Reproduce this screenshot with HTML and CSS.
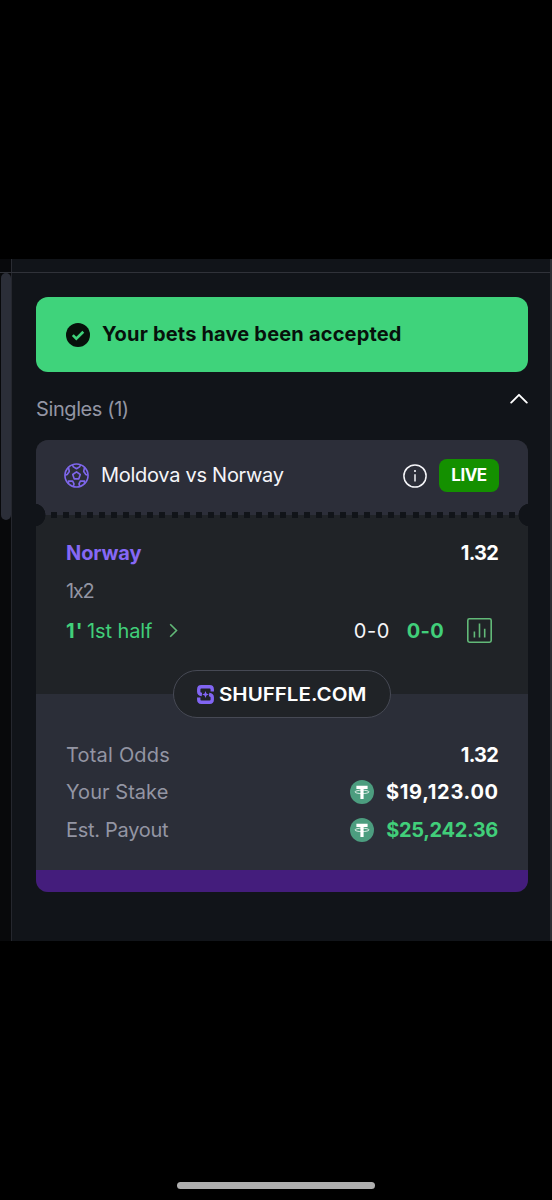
FILE: index.html
```html
<!DOCTYPE html>
<html lang="en">
<head>
<meta charset="utf-8">
<title>Bet slip</title>
<link rel="stylesheet" href="styles.css">
</head>
<body>
<div class="screen">
  <div class="panel">
    <div class="topbar"><div class="topbar-gutter"></div><div class="topbar-main"></div></div>
    <div class="content">
      <div class="gutter"><div class="scroll-thumb"></div></div>
      <main class="slip">
        <div class="banner">
          <svg class="icon24" viewBox="0 0 24 24"><circle cx="12" cy="12" r="12" fill="#07110b"/><path d="M6.8 12.1l3.5 3.5 7-6.9" fill="none" stroke="#3fd37b" stroke-width="2.7"/></svg>
          <span class="banner-text">Your bets have been accepted</span>
        </div>
        <div class="group">
          <span class="group-title">Singles (1)</span>
          <svg class="chevron-up" viewBox="0 0 18 11"><path d="M1.2 9.6L9 1.8l7.8 7.8" fill="none" stroke="#fff" stroke-width="1.9" stroke-linecap="round" stroke-linejoin="round"/></svg>
        </div>
        <section class="card">
          <header class="card-head">
            <svg class="ball" viewBox="0 0 26 26" fill="none" stroke="#7e66ea" stroke-width="1.7" stroke-linejoin="round">
              <circle cx="13" cy="13" r="12"/>
              <path d="M13 9.2l3.9 2.8-1.5 4.5h-4.8L9.1 12z"/>
              <path d="M8.7 2L9.8 4 13 6l3.2-2 1.1-2M1.3 12.6l2-.6 2.2-3.2-.8-4M24.7 12.6l-2-.6-2.2-3.2.8-4M4.7 21.4l-.1-2.7 4.4.1 1.4 3-.8 2.7M21.3 21.4l.1-2.7-4.4.1-1.4 3 .8 2.7"/>
            </svg>
            <span class="match">Moldova vs Norway</span>
            <svg class="icon24 info" viewBox="0 0 24 24"><circle cx="12" cy="12" r="11.1" fill="none" stroke="#f4f4f8" stroke-width="1.5"/><path d="M12 10.2v7.2" stroke="#f4f4f8" stroke-width="1.5"/><circle cx="12" cy="7" r="1.1" fill="#f4f4f8"/></svg>
            <span class="live">LIVE</span>
          </header>
          <div class="perforation"></div>
          <div class="card-body">
            <div class="row"><span class="pick">Norway</span><span class="odds">1.32</span></div>
            <div class="row"><span class="market">1x2</span></div>
            <div class="row status">
              <span class="minute">1'</span><span class="period">1st half</span>
              <svg class="chevron-right" viewBox="0 0 9 15"><path d="M1.2 1.2L7.5 7.5l-6.3 6.3" fill="none" stroke="#62b978" stroke-width="1.6"/></svg>
              <span class="score">0-0</span><span class="score-live">0-0</span>
              <svg class="stats" viewBox="0 0 25 25" fill="none" stroke="#62b978" stroke-width="1.6"><rect x=".8" y=".8" width="23.4" height="23.4" rx="1.6"/><path d="M7.4 13.4v6.2M12.5 5.6v14M17.7 10.8v8.8"/></svg>
            </div>
          </div>
          <div class="card-foot">
            <div class="brand">
              <svg class="brand-mark" viewBox="0 0 16 18"><g fill="none" stroke="#8165f3" stroke-width="3.2"><path d="M14.4 6.2V4.2Q14.4 1.6 12 1.6H4Q1.6 1.6 1.6 4.2v2.2Q1.6 8.6 4.6 9"/><path d="M1.6 11.8v2q0 2.6 2.4 2.6h8q2.4 0 2.4-2.6v-2.2q0-2.2-3-2.6"/></g><path d="M8 5.8l.9 2.3 2.3.9-2.3.9L8 12.2l-.9-2.3L4.8 9l2.3-.9z" fill="#8165f3"/></svg>
              <span class="brand-name">SHUFFLE.COM</span>
            </div>
            <div class="row"><span class="label total">Total Odds</span><span class="odds">1.32</span></div>
            <div class="row"><span class="label stake-label">Your Stake</span>
              <span class="money"><svg class="icon24" viewBox="0 0 24 24"><circle cx="12" cy="12" r="12" fill="#4c9d7f"/><path d="M6.4 5.8h11.2v3.1h-4v10.2h-3.2V8.9h-4z" fill="#fff"/><ellipse cx="12" cy="11.9" rx="7" ry="1.7" fill="none" stroke="#fff" stroke-width=".8"/></svg><span class="stake">$19,123.00</span></span></div>
            <div class="row"><span class="label payout-label">Est. Payout</span>
              <span class="money"><svg class="icon24" viewBox="0 0 24 24"><circle cx="12" cy="12" r="12" fill="#4c9d7f"/><path d="M6.4 5.8h11.2v3.1h-4v10.2h-3.2V8.9h-4z" fill="#fff"/><ellipse cx="12" cy="11.9" rx="7" ry="1.7" fill="none" stroke="#fff" stroke-width=".8"/></svg><span class="payout">$25,242.36</span></span></div>
          </div>
          <div class="card-strip"></div>
        </section>
      </main>
    </div>
  </div>
  <div class="home-bar"></div>
</div>
</body>
</html>
```

FILE: styles.css
```css
* { box-sizing: border-box; }
body { margin: 0; background: #000; color: #fff; font: 400 20px/37.6px Inter, sans-serif; }
svg { display: block; flex: none; }
span { white-space: nowrap; }

.screen { height: 1200px; padding: 259px 0 11px; display: flex; flex-direction: column; justify-content: space-between; align-items: center; overflow: hidden; }
.panel { width: 552px; height: 682px; background: #111419; border-right: 2px solid #2b2d33; display: flex; flex-direction: column; }
.topbar { height: 14px; display: flex; border-bottom: 1px solid #303239; }
.topbar-gutter { width: 12px; background: #08090c; border-right: 1px solid #2a2c33; }
.topbar-main { flex: 1; }
.content { flex: 1; display: flex; }
.gutter { width: 12px; background: #08090b; border-right: 1px solid #25272e; }
.scroll-thumb { width: 10px; height: 247px; margin-left: 1px; border-radius: 5px; background: #2b2e38; }
.slip { flex: 1; padding: 24px 22px 0 24px; }

.icon24 { width: 24px; height: 24px; }
.banner { height: 75px; padding-left: 30px; display: flex; align-items: center; gap: 12px; border-radius: 12px; background: #3fd37b; color: #07110b; }
.banner-text { padding-top: 1px; font-weight: 700; letter-spacing: .18px; }
.group { height: 68px; padding-top: 19px; display: flex; justify-content: space-between; align-items: flex-start; color: #9395a3; }
.group-title { letter-spacing: -.4px; }
.chevron-up { width: 18px; height: 11px; margin-top: 2px; }

.card { border-radius: 12px; overflow: hidden; background: #202327; }
.card-head { height: 75px; padding: 0 29px 4px 28px; display: flex; align-items: center; background: #2c2e39; }
.ball { width: 25px; height: 25px; }
.match { margin-left: 12px; letter-spacing: -.28px; color: #f5f5f9; }
.info { margin-left: auto; }
.live { width: 60px; height: 33px; margin-left: 12px; border-radius: 8px; background: #149000; font-size: 17px; font-weight: 700; letter-spacing: -.5px; line-height: 33px; text-align: center; }
/* Ticket tear line with a notch at either end */
.perforation { height: 24px; margin: -12px 0; position: relative; background:
  radial-gradient(circle at -2px 12px, #111419 11.2px, transparent 11.8px),
  radial-gradient(circle at 494px 12px, #111419 11.2px, transparent 11.8px),
  repeating-linear-gradient(90deg, #111419 0 6px, transparent 6px 12.05px) 14.5px 9px / 464px 6px no-repeat; }

.card-body { height: 179px; padding: 19px 30px 0; }
.row { display: flex; align-items: center; justify-content: space-between; height: 37.6px; }
.row > span:not(.money), .stake, .payout { padding-top: 2px; }
.pick { font-weight: 700; letter-spacing: -.1px; color: #8668f5; }
.odds { font-weight: 700; letter-spacing: -.8px; }
.market { letter-spacing: -1.3px; color: #9395a3; }
.status { margin-top: 2.4px; justify-content: flex-start; color: #41cf7a; }
.minute { width: 21px; font-weight: 700; letter-spacing: 1.2px; }
.period { letter-spacing: -.1px; }
.chevron-right { width: 9px; height: 15px; margin-left: 17px; }
.score { margin-left: auto; letter-spacing: .5px; color: #f5f5f9; }
.score-live { margin: 0 23px 0 17px; font-weight: 700; letter-spacing: .3px; }
.stats { width: 25px; height: 25px; margin-right: 6px; }

.card-foot { height: 176px; padding: 0 30px; display: flex; flex-direction: column; background: #2b2e38; }
.brand { width: 218px; height: 48px; margin: -24px 0 17.7px; padding-left: 23px; align-self: center; display: flex; align-items: center; border: 1.5px solid #464954; border-radius: 24px; background: #202327; }
.brand-mark { width: 17px; height: 19px; }
.brand-name { margin-left: 5px; padding-top: 2px; font-size: 19px; font-weight: 600; transform: scaleX(1.08); transform-origin: left; }
.label { color: #9395a3; }
.total { letter-spacing: .2px; }
.stake-label { letter-spacing: .05px; }
.payout-label { letter-spacing: -.28px; }
.money { display: flex; align-items: center; gap: 12px; }
.stake, .payout { width: 112px; font-weight: 700; text-align: right; }
.stake { letter-spacing: .7px; }
.payout { color: #41cf7a; letter-spacing: -.35px; }
.card-strip { height: 22px; background: #441d7c; }

.home-bar { width: 198px; height: 7px; border-radius: 4px; background: #afafaf; }
```
